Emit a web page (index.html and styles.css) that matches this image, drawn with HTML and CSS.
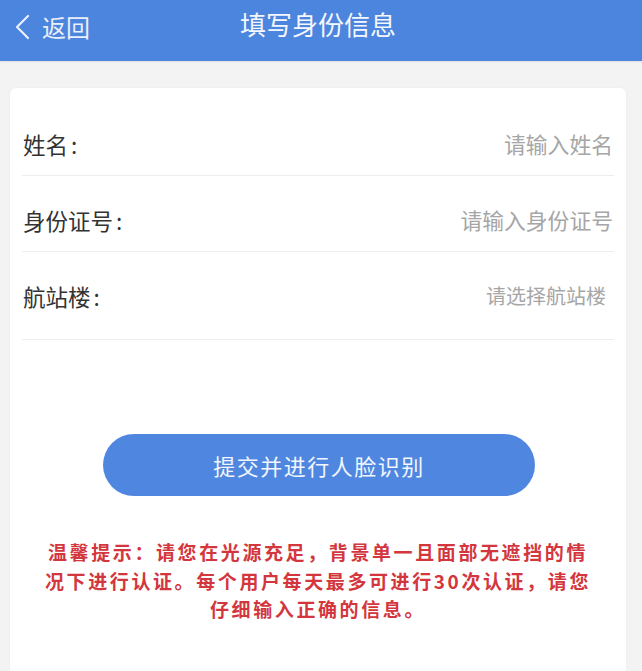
FILE: index.html
```html
<!DOCTYPE html>
<html lang="zh-CN">
<head>
<meta charset="utf-8">
<title>填写身份信息</title>
<link rel="stylesheet" href="styles.css">
</head>
<body>
<header class="navbar">
  <div class="back">
    <svg class="chev" width="18" height="26" viewBox="0 0 18 26"><path d="M15 2 L4 13 L15 24" fill="none" stroke="#eaf0fb" stroke-width="2.2" stroke-linecap="round" stroke-linejoin="round"/></svg>
    <span class="back-text">返回</span>
  </div>
  <h1 class="title">填写身份信息</h1>
</header>
<main class="page">
  <section class="card">
    <div class="row row-first">
      <span class="label">姓名<span class="colon">:</span></span>
      <span class="placeholder">请输入姓名</span>
    </div>
    <div class="row">
      <span class="label">身份证号<span class="colon">:</span></span>
      <span class="placeholder">请输入身份证号</span>
    </div>
    <div class="row row-last">
      <span class="label">航站楼<span class="colon">:</span></span>
      <span class="placeholder ph-select">请选择航站楼</span>
    </div>
    <div class="actions">
      <button class="submit">提交并进行人脸识别</button>
    </div>
    <p class="tip">温馨提示：请您在光源充足，背景单一且面部无遮挡的情况下进行认证。每个用户每天最多可进行30次认证，请您仔细输入正确的信息。</p>
  </section>
</main>
</body>
</html>
```

FILE: styles.css
```css
html, body {
  margin: 0;
  padding: 0;
  height: 100%;
  overflow: hidden;
}
body {
  background: #f3f3f3;
  font-family: "Noto Sans CJK SC", "Noto Sans", sans-serif;
}
.navbar {
  height: 61px;
  background: #4c85dd;
  display: flex;
  align-items: center;
  justify-content: center;
  position: relative;
  box-shadow: 0 1px 2px rgba(0,0,0,0.08);
}
.back {
  position: absolute;
  left: 13px;
  top: 14px;
  display: flex;
  align-items: center;
  gap: 11px;
}
.chev {
  display: block;
}
.back-text {
  color: #eaf0fb;
  font-size: 24px;
  line-height: 26px;
}
.title {
  margin: 0;
  color: #f4f7fd;
  font-size: 26px;
  font-weight: 400;
  line-height: 30px;
  margin-top: -13px;
  margin-left: -6px;
}
.page {
  padding: 27px 16px 0 10px;
}
.card {
  background: #ffffff;
  border-radius: 6px 6px 0 0;
  padding: 0 12px 0 12px;
  height: calc(100vh - 88px);
  box-sizing: border-box;
  box-shadow: 0 0 3px rgba(0,0,0,0.04);
}
.row {
  display: flex;
  justify-content: space-between;
  align-items: center;
  padding: 30px 1px 17px 1px;
  border-bottom: 1px solid #eeeeee;
  line-height: 28px;
}
.row-first {
  padding-top: 42px;
}
.row-last {
  padding-bottom: 29px;
}
.label {
  color: #333333;
  font-size: 22.5px;
}
.colon {
  margin-left: 3px;
}
.placeholder {
  color: #a6a6a6;
  font-size: 21.8px;
}
.ph-select {
  margin-right: 7px;
  font-size: 20px;
}
.actions {
  display: flex;
  justify-content: center;
  padding-top: 94px;
}
.submit {
  width: 432px;
  height: 62px;
  border: none;
  border-radius: 31px;
  background: #4f87e0;
  color: #f2f6fd;
  font-family: "Noto Sans CJK SC", "Noto Sans", sans-serif;
  font-size: 22px;
  letter-spacing: 1.5px;
  margin-left: 2px;
}
.tip {
  width: 552px;
  margin: 42px auto 0;
  text-align: center;
  color: #d3363d;
  font-size: 19px;
  font-weight: 700;
  letter-spacing: 2.6px;
  line-height: 28.5px;
}
```
